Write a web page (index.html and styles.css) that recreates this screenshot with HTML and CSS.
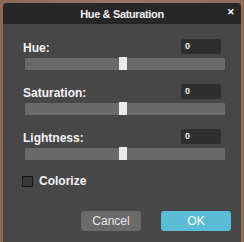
FILE: index.html
```html
<!DOCTYPE html>
<html lang="en">
<head>
  <meta charset="UTF-8">
  <title>Hue &amp; Saturation</title>
  <link rel="stylesheet" href="styles.css">
</head>
<body>
  <div class="dialog">
    <div class="titlebar">
      <span class="titulo">Hue &amp; Saturation</span>
      <span class="fechar">✕</span>
    </div>

    <div class="conteudo">
      <div class="campo">
        <div class="cabecalho">
          <label>Hue:</label>
          <div class="valor">0</div>
        </div>
        <div class="trilha"><div class="cursor"></div></div>
      </div>

      <div class="campo">
        <div class="cabecalho">
          <label>Saturation:</label>
          <div class="valor">0</div>
        </div>
        <div class="trilha"><div class="cursor"></div></div>
      </div>

      <div class="campo">
        <div class="cabecalho">
          <label>Lightness:</label>
          <div class="valor">0</div>
        </div>
        <div class="trilha"><div class="cursor"></div></div>
      </div>

      <div class="colorize">
        <span class="caixa"></span>
        <span>Colorize</span>
      </div>

      <div class="botoes">
        <button class="btn cancelar">Cancel</button>
        <button class="btn ok">OK</button>
      </div>
    </div>
  </div>
</body>
</html>
```

FILE: styles.css
```css
body {
  margin: 0;
  padding: 3px 3px 0 3px;
  height: 242px;
  box-sizing: border-box;
  background: linear-gradient(90deg, #8a6a56, #9a7a64 50%, #8c6c58);
  font-family: "Liberation Sans", Arial, sans-serif;
  overflow: hidden;
}

.dialog {
  width: 238px;
  height: 239px;
  background-color: #474747;
  border-radius: 4px 4px 0 0;
  overflow: hidden;
  color: #fff;
}

.titlebar {
  height: 21px;
  background-color: #272727;
  display: flex;
  align-items: center;
  justify-content: center;
  position: relative;
}

.titulo {
  font-size: 11px;
  font-weight: bold;
  letter-spacing: -0.35px;
  color: #f2f2f2;
}

.fechar {
  position: absolute;
  right: 6px;
  top: 4px;
  font-size: 9px;
  font-weight: bold;
  color: #fff;
}

.conteudo {
  padding: 15px 0 0 20px;
}

.campo {
  margin-bottom: 14px;
}

.cabecalho {
  width: 198px;
  height: 15px;
  display: flex;
  align-items: center;
  justify-content: space-between;
  margin-bottom: 4px;
}

label {
  font-size: 12px;
  font-weight: bold;
  color: #f4f4f4;
  padding-top: 2px;
}

.valor {
  width: 36px;
  height: 15px;
  line-height: 15px;
  padding-left: 4px;
  background-color: #2e2e2e;
  border-radius: 2px;
  font-size: 9px;
  font-weight: bold;
  color: #eee;
}

.trilha {
  position: relative;
  width: 200px;
  height: 12px;
  margin-left: 2px;
  background-color: #6a6a6a;
  border-radius: 1px;
}

.cursor {
  position: absolute;
  left: 94px;
  top: -1px;
  width: 8px;
  height: 13px;
  background-color: #ebebeb;
}

.colorize {
  display: flex;
  align-items: center;
  gap: 6px;
  margin-top: 2px;
  margin-left: -1px;
  font-size: 12px;
  font-weight: bold;
  color: #f4f4f4;
}

.caixa {
  width: 9px;
  height: 9px;
  border: 1px solid #161616;
  background-color: #3a3a3a;
}

.botoes {
  display: flex;
  justify-content: flex-end;
  gap: 20px;
  margin-top: 23px;
  padding-right: 10px;
}

.btn {
  height: 20px;
  border: none;
  border-radius: 3px;
  font-family: "Liberation Sans", Arial, sans-serif;
  font-size: 12px;
  padding: 0;
  cursor: pointer;
}

.cancelar {
  width: 60px;
  background-color: #6a6a6a;
  color: #e6e6e6;
}

.ok {
  width: 70px;
  background-color: #5bbcd6;
  color: #fff;
}
```
